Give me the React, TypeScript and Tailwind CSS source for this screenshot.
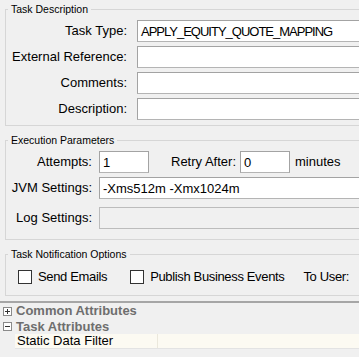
import type { ReactNode } from "react";

function Field({ value = "", disabled = false, className = "" }: { value?: string; disabled?: boolean; className?: string }) {
  return (
    <div
      className={[
        "flex h-[22px] items-center whitespace-nowrap border px-[3px] leading-none",
        disabled ? "border-[#bcbcbc] bg-[#f0f0f0]" : "border-[#a3a3a3] border-b-[#b4b4b4] bg-white",
        className,
      ].join(" ")}
    >
      {value}
    </div>
  );
}

function Label({ children }: { children: ReactNode }) {
  return <div className="flex h-[22px] items-center justify-end whitespace-nowrap">{children}</div>;
}

function CheckBox({ label }: { label: string }) {
  return (
    <div className="flex items-center gap-[6px] whitespace-nowrap">
      <span className="h-[14px] w-[14px] border border-[#333333] bg-white" />
      <span>{label}</span>
    </div>
  );
}

function TreeToggle({ open }: { open: boolean }) {
  return (
    <svg viewBox="0 0 9 9" className="h-[9px] w-[9px]" aria-hidden="true">
      <rect x="0.5" y="0.5" width="8" height="8" fill="#ffffff" stroke="#8a8a8a" />
      <path d="M2 4.5h5" stroke="#333333" />
      {!open && <path d="M4.5 2v5" stroke="#333333" />}
    </svg>
  );
}

export default function App() {
  return (
    <div className="h-[357px] w-[359px] overflow-hidden bg-[#f0f0f0] font-['Liberation_Sans',Arial,sans-serif] text-[13px] text-black">
      <div className="w-[430px] pt-[3px]">
        <fieldset className="ml-[5px] border border-[#d6d6d6] pb-[5px]">
          <legend className="ml-[2px] px-[3px] text-[10.5px] leading-[13px]">Task Description</legend>
          <div className="grid grid-cols-[121px_1fr] gap-x-[10px] gap-y-[4px] pt-[4px]">
            <Label>Task Type:</Label>
            <Field value="APPLY_EQUITY_QUOTE_MAPPING" className="tracking-[-1px]" />
            <Label>External Reference:</Label>
            <Field />
            <Label>Comments:</Label>
            <Field />
            <Label>Description:</Label>
            <Field />
          </div>
        </fieldset>

        <fieldset className="ml-[5px] mt-[8px] border border-[#d6d6d6] pb-[10px]">
          <legend className="ml-[2px] px-[3px] text-[10.5px] leading-[13px]">Execution Parameters</legend>
          <div className="grid grid-cols-[86px_1fr] gap-x-[7px] pt-[4px]">
            <Label>Attempts:</Label>
            <div className="flex items-center whitespace-nowrap">
              <Field value="1" className="w-[50px]" />
              <span className="ml-[22px]">Retry After:</span>
              <Field value="0" className="ml-[4px] w-[50px]" />
              <span className="ml-[5px]">minutes</span>
            </div>
            <div className="mt-[4px]">
              <Label>JVM Settings:</Label>
            </div>
            <Field value="-Xms512m -Xmx1024m" className="mt-[4px]" />
            <div className="mt-[8px]">
              <Label>Log Settings:</Label>
            </div>
            <Field disabled className="mt-[8px]" />
          </div>
        </fieldset>

        <fieldset className="ml-[5px] mt-[8px] border border-[#d6d6d6] pb-[7px]">
          <legend className="ml-[2px] px-[3px] text-[10.5px] leading-[13px]">Task Notification Options</legend>
          <div className="mt-[5px] flex h-[22px] items-center pl-[12px] tracking-[-0.35px]">
            <CheckBox label="Send Emails" />
            <div className="ml-[23px]">
              <CheckBox label="Publish Business Events" />
            </div>
            <span className="ml-[19px] whitespace-nowrap">To User:</span>
          </div>
        </fieldset>

        <div className="mt-[5px] border-t-2 border-[#a6a6a6]" />

        <div className="flex h-[16px] items-center gap-[4px] pl-[3px] text-[13px] font-bold text-[#6e6e6e]">
          <TreeToggle open={false} />
          <span>Common Attributes</span>
        </div>
        <div className="flex h-[15px] items-center gap-[4px] pl-[3px] text-[13px] font-bold text-[#6e6e6e]">
          <TreeToggle open />
          <span>Task Attributes</span>
        </div>
        <div className="ml-[15px] flex h-[15px] border-b border-[#e3e3e3] bg-[#fcfaf2]">
          <div className="flex w-[143px] items-center border-r border-[#ebe8dc] pl-[2px]">Static Data Filter</div>
          <div className="flex-1" />
        </div>
      </div>
    </div>
  );
}
